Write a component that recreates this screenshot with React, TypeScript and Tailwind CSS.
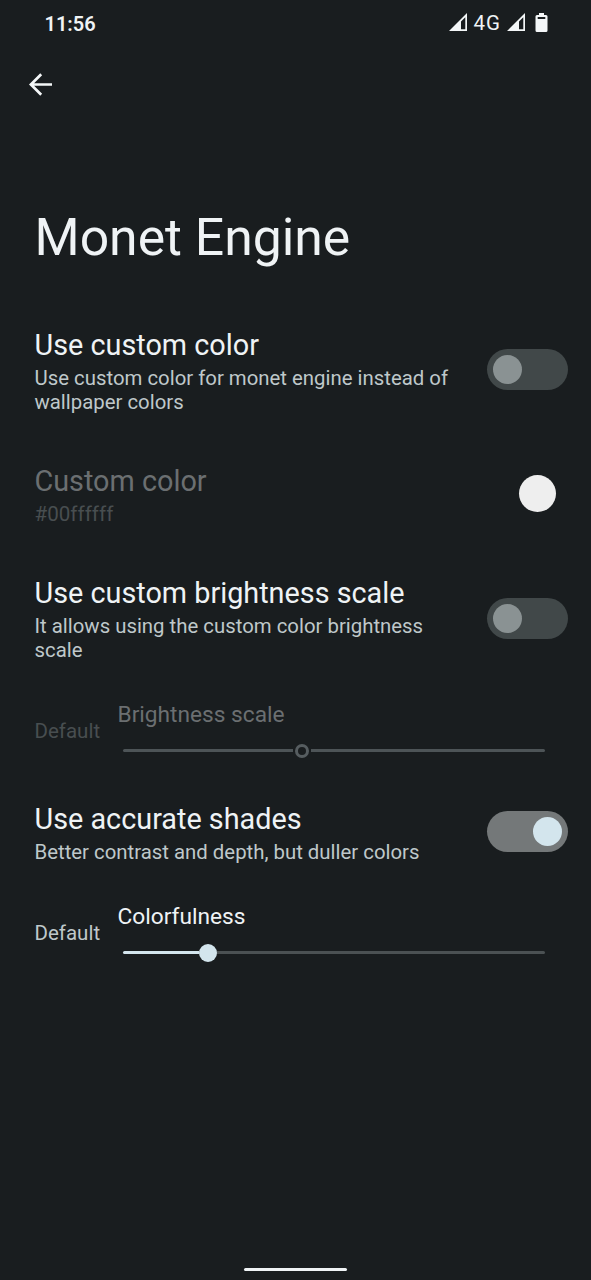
import React from "react";

function Toggle({ on = false }: { on?: boolean }) {
  return (
    <div className={`flex h-[41px] w-[81px] shrink-0 items-center rounded-full px-[6px] ${on ? "justify-end bg-[#747879]" : "justify-start bg-[#414849]"}`}>
      <div className={`size-[29px] rounded-full ${on ? "bg-[#d3e5ed]" : "bg-[#8a9293]"}`} />
    </div>
  );
}

function Title({ children }: { children: React.ReactNode }) {
  return <div className="text-[28.8px] leading-[34px]">{children}</div>;
}

function Description({ children }: { children: React.ReactNode }) {
  return <p className="mt-[4px] text-[20.37px] leading-[24px] text-[#bfc8ca]">{children}</p>;
}

function Signal() {
  return (
    <svg className="mt-[-3px] h-[19px] w-[19px]" viewBox="0 0 19 19">
      <path fillRule="evenodd" d="M18 0V18H0ZM12 8.500V16.300H16.300V4.200Z" fill="#f4f7f8" />
    </svg>
  );
}

export default function App() {
  return (
    <main className="flex h-[1280px] w-[591px] flex-col overflow-hidden bg-[#191d1f] font-['Roboto',sans-serif] text-[#eff3f5]">
      <header className="flex h-[48px] items-center justify-between pl-[44.5px] pr-[43.5px]">
        <span className="text-[20px] font-semibold">11:56</span>
        <div className="flex items-center">
          <Signal />
          <span className="ml-[6px] mt-[-2px] w-[33px] text-[20.5px] tracking-[0.9px]">4G</span>
          <Signal />
          <svg className="ml-[9px] mt-[-2px] h-[20px] w-[13px]" viewBox="0 0 13 20">
            <path fillRule="evenodd" d="M4 0h5v2h2a1.500 1.500 0 0 1 1.500 1.500V17.500a1.500 1.500 0 0 1-1.500 1.500H2A1.500 1.500 0 0 1 0.500 17.500V3.500A1.500 1.500 0 0 1 2 2h2zM2.700 4v2h7.600v-2z" fill="#f4f7f8" />
          </svg>
        </div>
      </header>
      <svg className="ml-[28px] mt-[24px] h-[25px] w-[25px]" viewBox="0 0 25 25" fill="none" stroke="#f4f7f8" strokeWidth="2.7"><path d="M24 12.500H3M13.200 2.200L2.900 12.500L13.200 22.800" /></svg>
      <h1 className="ml-[34.5px] mt-[111px] h-[60px] text-[51.7px] leading-[60px]">Monet Engine</h1>
      <section className="mt-[60px] flex h-[86px] items-start justify-between pl-[34.5px] pr-[23px]">
        <div className="w-[430px]">
          <Title>Use custom color</Title>
          <Description>Use custom color for monet engine instead of<br />wallpaper colors</Description>
        </div>
        <div className="mt-[21px]"><Toggle /></div>
      </section>
      <section className="mt-[50px] flex h-[62px] justify-between pl-[34.5px] pr-[35px]">
        <div>
          <div className="text-[28.8px] leading-[34px] text-[#6b6f71]">Custom color</div>
          <p className="mt-[4px] text-[20.6px] leading-[24px] text-[#484e50]">#00ffffff</p>
        </div>
        <div className="mt-[11px] size-[37px] rounded-full bg-[#eee]" />
      </section>
      <section className="mt-[50px] flex h-[86px] items-start justify-between pl-[34.5px] pr-[23px]">
        <div className="w-[430px]">
          <Title>Use custom brightness scale</Title>
          <Description>It allows using the custom color brightness<br />scale</Description>
        </div>
        <div className="mt-[22px]"><Toggle /></div>
      </section>
      <section className="mt-[39px] flex h-[63px] pl-[34.5px]">
        <div className="mt-[18px] w-[83px] text-[20.5px] leading-[24px] text-[#484e50]">Default</div>
        <div>
          <div className="text-[22.7px] leading-[28px] text-[#6b6f71]">Brightness scale</div>
          <div className="ml-[5.5px] mt-[13.5px] flex h-[16px] w-[422px] items-center">
            <div className="h-[3.5px] w-[170px] rounded-l-full bg-[#4d5457]" />
            <div className="mx-[2px] size-[14px] rounded-full border-[3.5px] border-[#565d60]" />
            <div className="h-[3.5px] flex-1 rounded-r-full bg-[#4d5457]" />
          </div>
        </div>
      </section>
      <section className="mt-[38px] flex h-[62px] items-start justify-between pl-[34.5px] pr-[23px]">
        <div>
          <Title>Use accurate shades</Title>
          <Description>Better contrast and depth, but duller colors</Description>
        </div>
        <div className="mt-[9px]"><Toggle on /></div>
      </section>
      <section className="mt-[39px] flex h-[64px] pl-[34.5px]">
        <div className="mt-[18px] w-[83px] text-[20.5px] leading-[24px] text-[#bfc8ca]">Default</div>
        <div>
          <div className="text-[22.7px] leading-[28px]">Colorfulness</div>
          <div className="ml-[5.5px] mt-[12.5px] flex h-[18px] w-[422px] items-center">
            <div className="h-[3.5px] w-[76px] rounded-l-full bg-[#d3e5ed]" />
            <div className="size-[18px] rounded-full bg-[#d3e5ed]" />
            <div className="h-[3.5px] flex-1 rounded-r-full bg-[#4b5153]" />
          </div>
        </div>
      </section>
      <div className="mx-auto mb-[9px] mt-auto h-[3px] w-[103px] rounded-full bg-[#eff3f5]" />
    </main>
  );
}
